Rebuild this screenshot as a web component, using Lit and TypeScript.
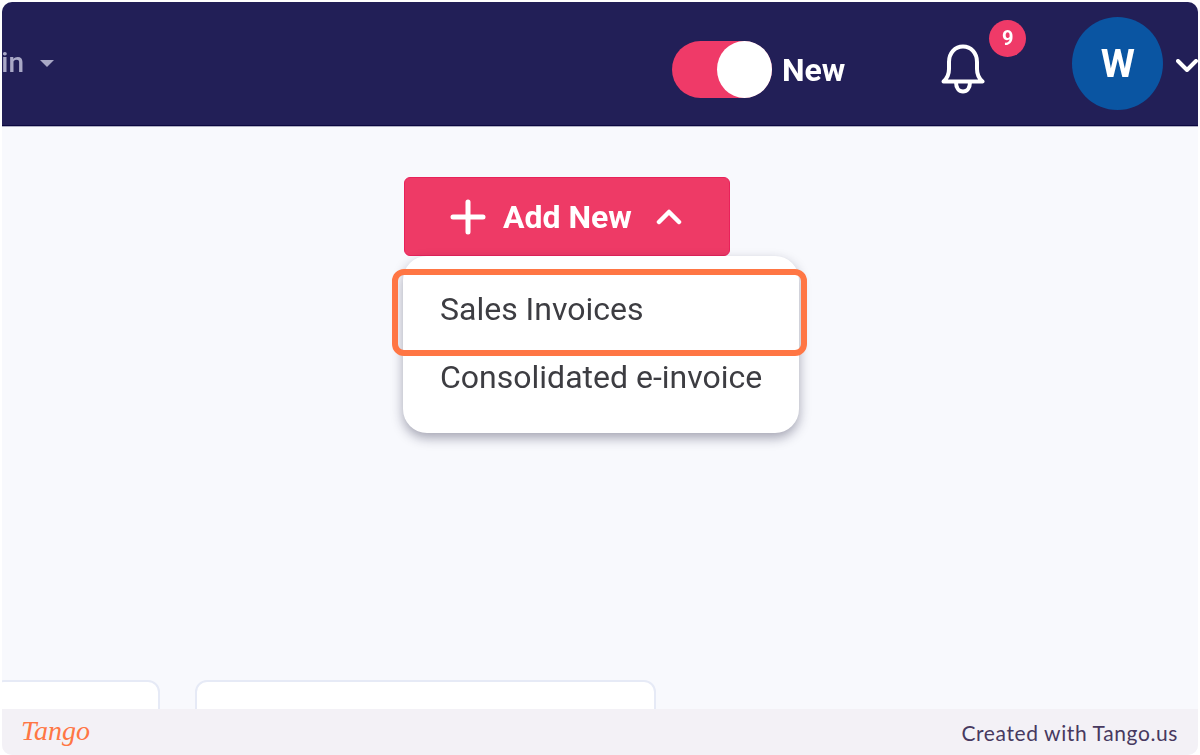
import { LitElement, html, css } from 'lit';
import { customElement } from 'lit/decorators.js';

@customElement('app-root')
export class AppRoot extends LitElement {
    static override styles = css`
    :host {
      display: block;
      width: 1200px;
      height: 755px;
      background: #fff;
      font-family: Roboto, "Liberation Sans", sans-serif;
      overflow: hidden;
    }
    .shot {
      display: flex;
      flex-direction: column;
      height: 753px;
      margin: 2px 2px 0;
      border-radius: 10px;
      overflow: hidden;
      background: #f8f9fd;
    }
    .topbar {
      flex: none;
      display: flex;
      align-items: center;
      height: 123px;
      background: #221f57;
      border-bottom: 1px solid #0b0840;
      box-shadow: 0 1px 0 #b0b0c4;
    }
    /* the source capture is an upscaled, slightly soft picture */
    .soft {
      filter: blur(0.6px);
    }
    .nav-item {
      flex: none;
      display: flex;
      align-items: center;
      width: 52px;
      justify-content: flex-end;
      overflow: hidden;
      color: #a9a8c6;
      font-size: 28px;
      font-weight: 500;
      margin-top: -2px;
    }
    .nav-item span {
      flex: none;
    }
    .caret {
      flex: none;
      width: 0;
      height: 0;
      margin: 2px 0 0 16px;
      border-left: 7px solid transparent;
      border-right: 7px solid transparent;
      border-top: 7px solid #a9a8c6;
    }
    .toggle {
      flex: none;
      display: flex;
      align-items: center;
      margin-left: 618px;
      margin-top: 12px;
      color: #fff;
      font-size: 32px;
      font-weight: 500;
    }
    .track {
      display: flex;
      justify-content: flex-end;
      width: 100px;
      height: 57px;
      border-radius: 29px;
      background: #ef3a68;
    }
    .knob {
      width: 55px;
      height: 57px;
      border-radius: 50%;
      background: #fff;
    }
    .toggle span {
      margin-left: 10px;
      font-weight: 700;
    }
    .bell {
      flex: none;
      position: relative;
      display: flex;
      margin-left: 96px;
      margin-top: 10px;
    }
    .badge {
      position: absolute;
      top: -24px;
      left: 48px;
      display: flex;
      align-items: center;
      justify-content: center;
      width: 37px;
      height: 37px;
      border-radius: 50%;
      background: #ef3a68;
      color: #fff;
      font-size: 20px;
      font-weight: 700;
    }
    .avatar {
      flex: none;
      display: flex;
      align-items: center;
      justify-content: center;
      width: 91px;
      height: 93px;
      margin-left: 87px;
      border-radius: 50%;
      background: #0a55a2;
      color: #fff;
      font-size: 39px;
      font-weight: 700;
    }
    .chevron {
      flex: none;
      margin-left: 12px;
      margin-top: 4px;
    }
    main {
      flex: 1;
      display: flex;
      flex-direction: column;
      min-height: 0;
      overflow: hidden;
    }
    .actions {
      position: relative;
      flex: none;
      margin: 51px 0 0 402px;
      width: 326px;
    }
    .add-btn {
      display: flex;
      align-items: center;
      box-sizing: border-box;
      width: 326px;
      height: 79px;
      padding-left: 45px;
      border: 1px solid #e8225a;
      border-radius: 6px;
      background: #ee3a66;
      color: #fff;
      font-size: 32px;
      font-weight: 700;
    }
    .add-btn span {
      margin-left: 17px;
    }
    .add-btn svg:last-child {
      margin-left: 24px;
    }
    .menu {
      position: absolute;
      top: 79px;
      left: -1px;
      box-sizing: border-box;
      width: 396px;
      height: 177px;
      padding-top: 19px;
      border-radius: 24px;
      background: #fff;
      box-shadow: 0 5px 12px rgba(30, 30, 60, 0.38);
      color: #3d3d42;
      font-size: 32px;
    }
    .menu-item {
      height: 68px;
      padding-left: 37px;
      line-height: 68px;
      white-space: nowrap;
    }
    .highlight {
      position: absolute;
      top: 92px;
      left: -12px;
      box-sizing: border-box;
      width: 415px;
      height: 87px;
      border: 6px solid #ff7644;
      border-radius: 12px;
    }
    .cards {
      flex: none;
      display: flex;
      gap: 35px;
      margin: auto 0 0 -10px;
      height: 29px;
    }
    .card {
      box-sizing: border-box;
      height: 60px;
      border: 2px solid #e6eaf6;
      border-radius: 12px;
      background: #fff;
    }
    .card.small {
      width: 168px;
    }
    .card.wide {
      width: 461px;
    }
    footer {
      flex: none;
      display: flex;
      align-items: center;
      justify-content: space-between;
      height: 46px;
      padding: 0 20px 0 19px;
      background: #f3f1f6;
    }
    .logo {
      color: #ff7644;
      font-family: "Liberation Serif", serif;
      font-style: italic;
      font-size: 28px;
      margin-top: -3px;
    }
    .credit {
      color: #47395f;
      font-family: Lato, sans-serif;
      font-size: 21px;
      letter-spacing: 0.6px;
    }
  `;

    override render() {
        return html`
      <div class="shot">
        <header class="topbar">
          <div class="nav-item soft"><span>in</span><div class="caret"></div></div>
          <div class="toggle soft">
            <div class="track"><div class="knob"></div></div>
            <span>New</span>
          </div>
          <div class="bell soft">
            <svg width="44" height="50" viewBox="0 0 44 50" fill="none" stroke="#fff" stroke-width="4" stroke-linecap="round" stroke-linejoin="round">
              <path d="M2.500 37.500c4-3.500 5.500-7 5.500-12.500v-7c0-9 6-15.500 14-15.500s14 6.500 14 15.500v7c0 5.500 1.500 9 5.500 12.500z"/>
              <path d="M15 38c0 6 3 9.500 7 9.500s7-3.500 7-9.500"/>
            </svg>
            <div class="badge">9</div>
          </div>
          <div class="avatar soft">W</div>
          <svg class="chevron soft" width="24" height="16" viewBox="0 0 24 16" fill="none" stroke="#fff" stroke-width="4" stroke-linecap="round" stroke-linejoin="round">
            <path d="M3 3l9 9 9-9"/>
          </svg>
        </header>
        <main>
          <div class="actions">
            <div class="add-btn soft">
              <svg width="36" height="36" viewBox="0 0 36 36" stroke="#fff" stroke-width="5" stroke-linecap="round">
                <path d="M18 3v30M3 18h30"/>
              </svg>
              <span>Add New</span>
              <svg width="26" height="16" viewBox="0 0 26 16" fill="none" stroke="#fff" stroke-width="4.500" stroke-linecap="round" stroke-linejoin="round">
                <path d="M3 13l10-10 10 10"/>
              </svg>
            </div>
            <div class="menu">
              <div class="menu-item soft">Sales Invoices</div>
              <div class="menu-item soft">Consolidated e-invoice</div>
            </div>
            <div class="highlight"></div>
          </div>
          <div class="cards">
            <div class="card small"></div>
            <div class="card wide"></div>
          </div>
        </main>
        <footer>
          <div class="logo">Tango</div>
          <div class="credit">Created with Tango.us</div>
        </footer>
      </div>
    `;
    }
}
